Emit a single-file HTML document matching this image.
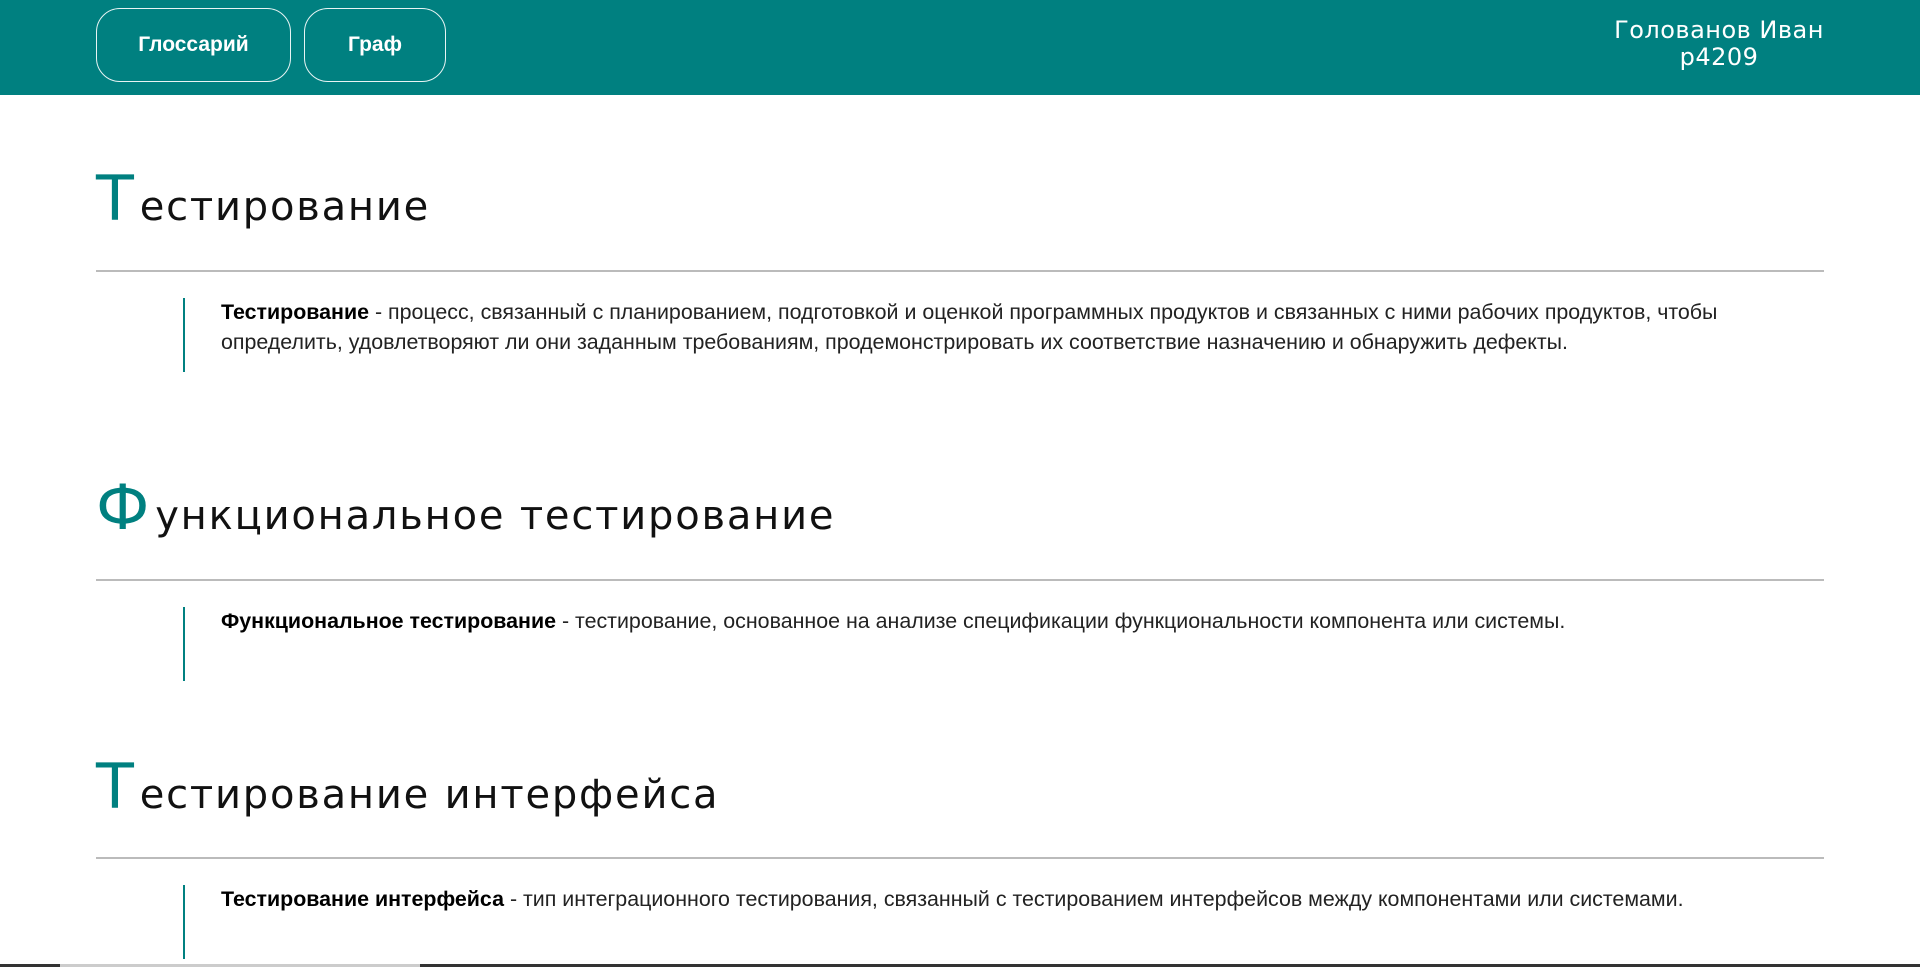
<!DOCTYPE html>
<html><head><meta charset="utf-8"><style>
html,body{margin:0;padding:0;background:#fff;width:1920px;height:967px;overflow:hidden;position:relative}
.hdr{position:absolute;left:0;top:0;width:1920px;height:95px;background:#008080}
.btn{position:absolute;top:8px;height:74px;border:1px solid #e8f4f4;border-radius:24px;box-sizing:border-box;color:#fff;font:bold 21px "Liberation Sans Narrow","Liberation Sans",sans-serif;display:flex;align-items:center;justify-content:center}
.name{position:absolute;left:1560px;width:318px;top:17px;text-align:center;color:#fff;font:24px/27px "DejaVu Sans",sans-serif;letter-spacing:0.5px}
h2{position:absolute;left:96px;margin:0;font:40px "DejaVu Sans",sans-serif;color:#111;letter-spacing:1.8px;white-space:nowrap}
h2 span{color:#008080;font-size:62px;margin-right:4px}
.hr{position:absolute;left:96px;width:1728px;height:2px;background:#bbb}
.bq{position:absolute;left:183px;width:2px;background:#008080}
.t{position:absolute;left:221px;font:21.4px/30px "Liberation Sans Narrow","Liberation Sans",sans-serif;color:#222;white-space:nowrap}
.t b{color:#000}
</style></head><body>
<div class="hdr">
<div class="btn" style="left:96px;width:195px">Глоссарий</div>
<div class="btn" style="left:304px;width:142px">Граф</div>
<div class="name">Голованов Иван<br>р4209</div>
</div>
<h2 style="top:162px"><span>Т</span>естирование</h2>
<div class="hr" style="top:270px"></div>
<div class="bq" style="top:298px;height:74px"></div>
<div class="t" style="top:297px"><b>Тестирование</b> - процесс, связанный с планированием, подготовкой и оценкой программных продуктов и связанных с ними рабочих продуктов, чтобы<br>определить, удовлетворяют ли они заданным требованиям, продемонстрировать их соответствие назначению и обнаружить дефекты.</div>
<h2 style="top:471px"><span>Ф</span>ункциональное тестирование</h2>
<div class="hr" style="top:579px"></div>
<div class="bq" style="top:607px;height:74px"></div>
<div class="t" style="top:606px"><b>Функциональное тестирование</b> - тестирование, основанное на анализе спецификации функциональности компонента или системы.</div>
<h2 style="top:750px"><span>Т</span>естирование интерфейса</h2>
<div class="hr" style="top:857px"></div>
<div class="bq" style="top:885px;height:74px"></div>
<div class="t" style="top:884px"><b>Тестирование интерфейса</b> - тип интеграционного тестирования, связанный с тестированием интерфейсов между компонентами или системами.</div>
<div style="position:absolute;left:0;top:964px;width:1920px;height:3px;background:#333"></div>
<div style="position:absolute;left:60px;top:964px;width:360px;height:3px;background:#ccc"></div>
</body></html>
